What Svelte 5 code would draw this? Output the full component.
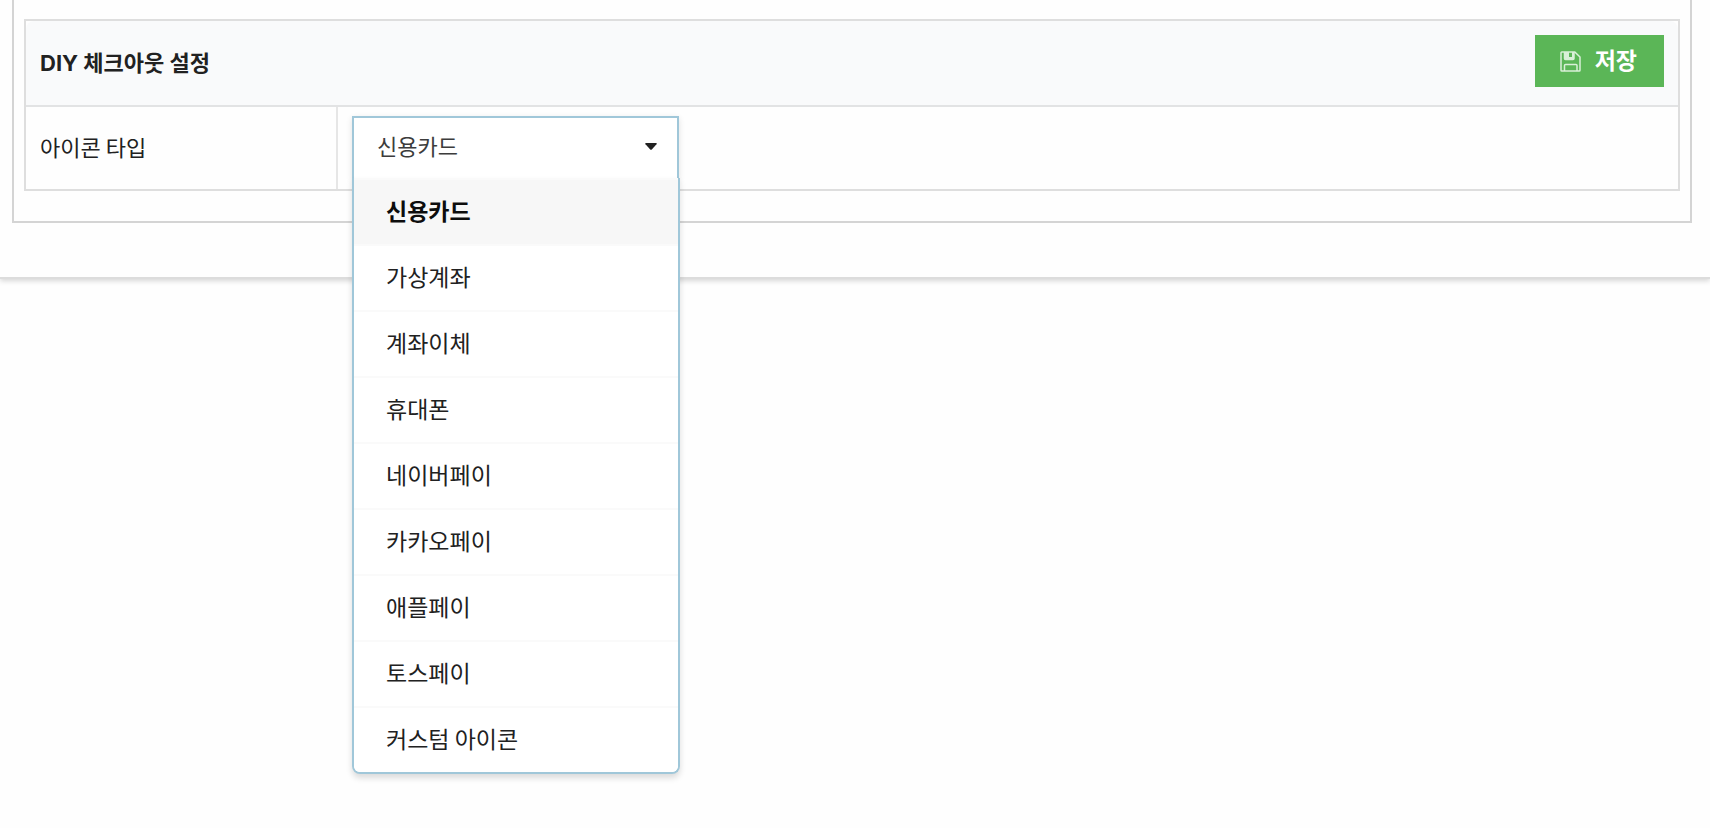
<script lang="ts">
  const iconTypes = [
    { value: 'card', label: '신용카드' },
    { value: 'vbank', label: '가상계좌' },
    { value: 'transfer', label: '계좌이체' },
    { value: 'phone', label: '휴대폰' },
    { value: 'naverpay', label: '네이버페이' },
    { value: 'kakaopay', label: '카카오페이' },
    { value: 'applepay', label: '애플페이' },
    { value: 'tosspay', label: '토스페이' },
    { value: 'custom', label: '커스텀 아이콘' }
  ];

  let iconType = $state('card');
  let open = $state(true);

  // The styled menu replaces the browser's own popup
  function toggleMenu(event: MouseEvent) {
    event.preventDefault();
    open = !open;
  }

  function choose(value: string) {
    iconType = value;
    open = false;
  }

  function handleKeydown(event: KeyboardEvent) {
    if (event.key === 'Escape') {
      open = false;
    }
  }
</script>

<svelte:window onkeydown={handleKeydown} />

<div class="page">
  <main class="content">
    <section class="panel">
      <form class="settings" onsubmit={(e) => e.preventDefault()}>
        <header class="settings-header">
          <h2 class="title">DIY 체크아웃 설정</h2>
          <button type="submit" class="save-button">
            <svg class="save-icon" viewBox="0 0 21 21" aria-hidden="true">
              <path d="M1.8 1H14.8L20 6V19.2Q20 20 19.2 20H1.8Q1 20 1 19.2V1.8Q1 1 1.8 1Z" />
              <path d="M4.5 1V7.5Q4.5 8.5 5.5 8.5H13Q14 8.5 14 7.5V1M4.5 20V14.5Q4.5 13.5 5.5 13.5H16Q17 13.5 17 14.5V20" />
              <path class="shutter" d="M4.5 1H9V6H12V1H14V8.5H4.5Z" />
            </svg>
            <span class="save-label">저장</span>
          </button>
        </header>

        <table class="settings-table">
          <tbody>
            <tr>
              <th scope="row"><label for="icon-type">아이콘 타입</label></th>
              <td>
                <div class="dropdown" class:open>
                  <select id="icon-type" bind:value={iconType} onmousedown={toggleMenu}>
                    {#each iconTypes as type}
                      <option value={type.value}>{type.label}</option>
                    {/each}
                  </select>
                  <svg class="caret" viewBox="0 0 12 7" aria-hidden="true">
                    <path d="M1 0H11Q12.3 0.2 11.5 1.2L6.8 6.4Q6 7.2 5.2 6.4L0.5 1.2Q-0.3 0.2 1 0Z" />
                  </svg>

                  {#if open}
                    <ul class="menu">
                      {#each iconTypes as type}
                        <li>
                          <button
                            type="button"
                            class="item"
                            class:selected={type.value === iconType}
                            onclick={() => choose(type.value)}
                          >
                            {type.label}
                          </button>
                        </li>
                      {/each}
                    </ul>
                  {/if}
                </div>
              </td>
            </tr>
          </tbody>
        </table>
      </form>
    </section>
  </main>
</div>

<style>
  :global(body) {
    margin: 0;
    background: #fefefe;
  }

  .page {
    min-height: 100vh;
  }

  .page,
  .page button,
  .page select {
    font-family: 'Noto Sans CJK KR', 'Noto Sans', sans-serif;
    font-size: 22px;
    line-height: 32px;
    color: #212121;
  }

  .content {
    padding: 0 18px 54px 12px;
    border-bottom: 2px solid #dcdcdc;
    box-shadow: 0 2px 5px rgba(0, 0, 0, 0.16);
  }

  .panel {
    padding: 19px 10px 30px;
    border: 2px solid #d4d4d4;
    border-top: 0;
  }

  .settings {
    border: 2px solid #dedede;
  }

  .settings-header {
    display: flex;
    justify-content: space-between;
    align-items: center;
    padding: 14px 14px 18px;
    border-bottom: 2px solid #e2e3e4;
    border-radius: 8px 8px 0 0;
    background: #f9fafb;
  }

  .title {
    margin: 0;
    padding-top: 4px;
    font-family: Inter, 'Noto Sans CJK KR', sans-serif;
    font-size: 22px;
    font-weight: 700;
  }

  .page .save-button {
    display: flex;
    align-items: center;
    gap: 14px;
    padding: 8px 27px 8px 25px;
    border: 0;
    background: #5bb657;
    color: #fff;
    font-size: 23px;
    font-weight: 700;
    cursor: pointer;
  }

  .save-label {
    padding-bottom: 4px;
  }

  .save-icon {
    width: 21px;
    height: 21px;
    fill: none;
    stroke: #d9f0d8;
    stroke-width: 1.5;
  }

  .save-icon .shutter {
    fill: #d9f0d8;
    stroke: none;
  }

  .settings-table {
    width: 100%;
    border-spacing: 0;
  }

  th {
    box-sizing: border-box;
    width: 312px;
    padding: 8px 14px 12px;
    border-right: 2px solid #e6e6e6;
    font-weight: 400;
    text-align: left;
  }

  td {
    padding: 9px 14px;
  }

  .dropdown {
    position: relative;
    width: 327px;
  }

  .dropdown select {
    display: block;
    box-sizing: border-box;
    width: 100%;
    height: 64px;
    padding: 0 48px 6px 23px;
    border: 2px solid #dedede;
    border-radius: 0;
    outline: none;
    appearance: none;
    background: #fff;
    color: #3c3c3c;
    cursor: pointer;
  }

  .dropdown.open select {
    border-color: #a0c7d9;
    box-shadow: 0 2px 6px rgba(0, 0, 0, 0.12);
  }

  .caret {
    position: absolute;
    top: 27px;
    right: 22px;
    width: 12px;
    height: 7px;
    fill: #212121;
    pointer-events: none;
  }

  .menu {
    position: absolute;
    z-index: 10;
    top: 62px;
    left: 0;
    width: 324px;
    margin: 0;
    padding: 0;
    border: 2px solid #a0c7d9;
    border-top: 0;
    border-radius: 0 0 8px 8px;
    background: #fff;
    box-shadow: 0 4px 6px rgba(0, 0, 0, 0.14);
    list-style: none;
    overflow: hidden;
  }

  .page .item {
    display: block;
    width: 100%;
    padding: 14px 32px 18px;
    border: 0;
    border-top: 2px solid #fafafa;
    background: #fff;
    font-size: 23px;
    text-align: left;
    cursor: pointer;
  }

  .page .item:hover,
  .page .item.selected {
    background: #f7f7f7;
  }

  .page .item.selected {
    color: #0d0d0d;
    font-weight: 700;
  }
</style>
